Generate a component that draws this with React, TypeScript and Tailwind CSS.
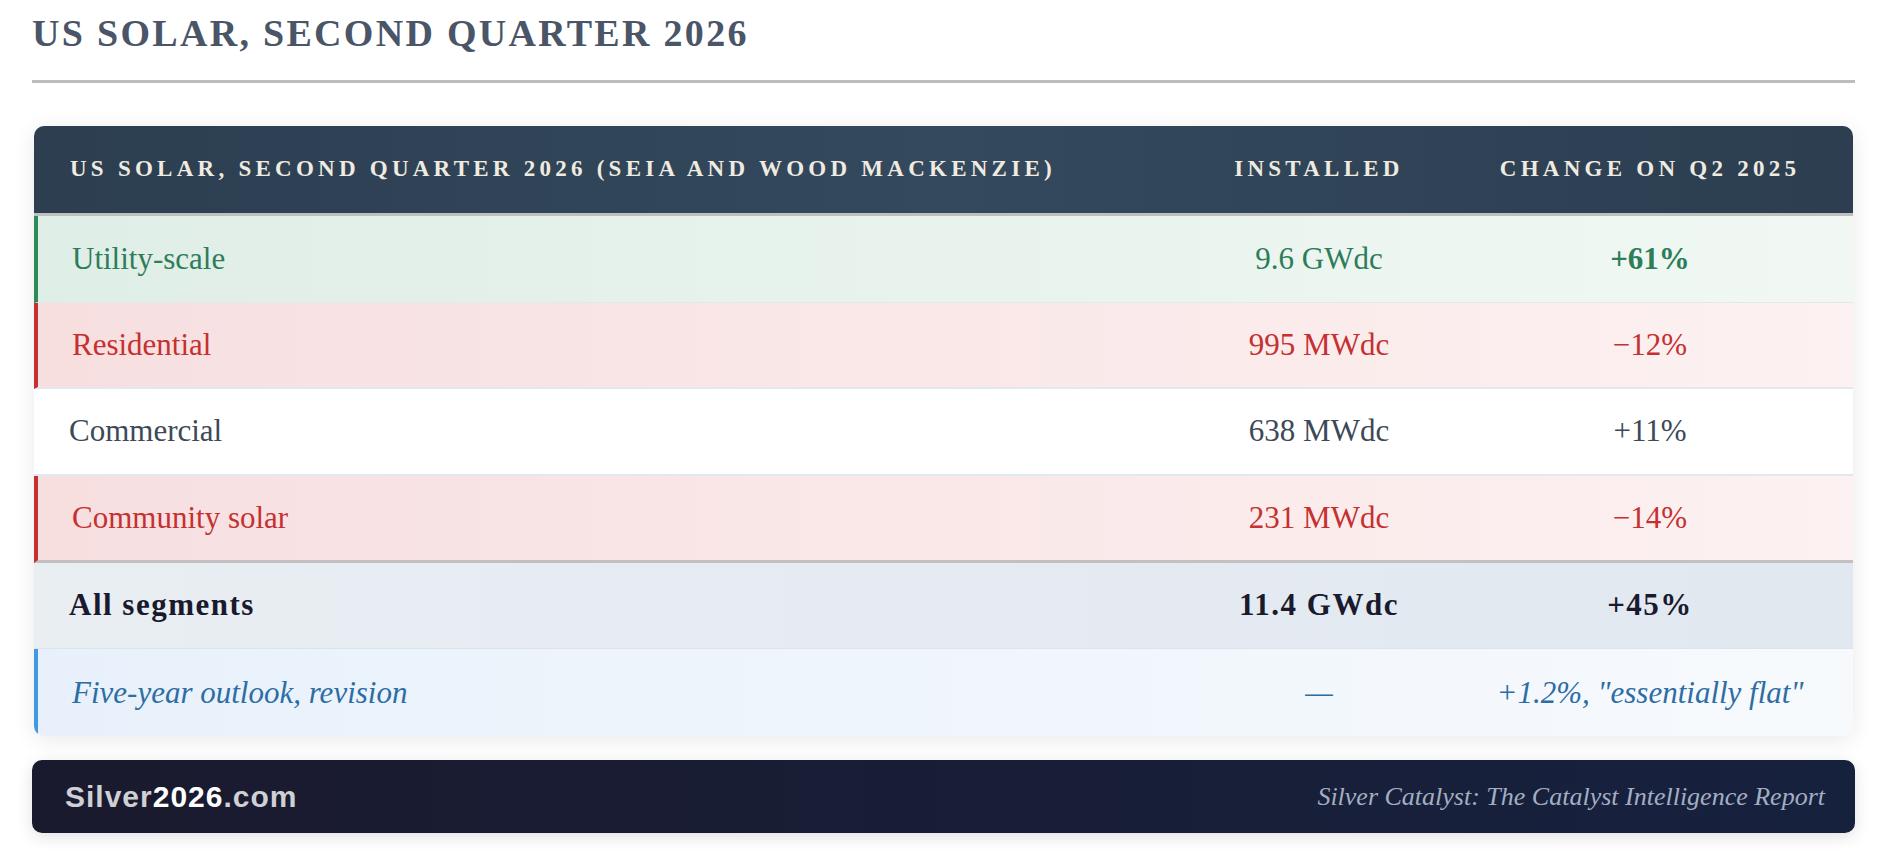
type Row = {
    label: string
    installed: string
    change: string
    rowCls: string
    textCls: string
    changeCls?: string
}

const rows: Row[] = [
    {
        label: 'Utility-scale',
        installed: '9.6 GWdc',
        change: '+61%',
        rowCls: 'bg-linear-to-r from-[#dfeee6] to-[#f1f8f4] border-l-4 border-l-[#2e8b57] pl-[34px] border-b border-b-[#e2e8f0]',
        textCls: 'text-[#2e7d5a]',
        changeCls: 'font-bold',
    },
    {
        label: 'Residential',
        installed: '995 MWdc',
        change: '\u221212%',
        rowCls: 'bg-linear-to-r from-[#f7dfe0] to-[#fdf1f1] border-l-4 border-l-[#c53030] pl-[34px] border-b-2 border-b-[#e2e8f0]',
        textCls: 'text-[#c53030]',
    },
    {
        label: 'Commercial',
        installed: '638 MWdc',
        change: '+11%',
        rowCls: 'bg-white pl-[35px] border-b-2 border-b-[#e2e8f0]',
        textCls: 'text-[#3d4858]',
    },
    {
        label: 'Community solar',
        installed: '231 MWdc',
        change: '\u221214%',
        rowCls: 'bg-linear-to-r from-[#f7dfe0] to-[#fdf1f1] border-l-4 border-l-[#c53030] pl-[34px] border-b-[3px] border-b-[#c4c0c1]',
        textCls: 'text-[#c53030]',
    },
]

export default function App() {
    return (
        <div className="min-h-screen w-full bg-white pl-8 pr-[33px] pt-3 pb-6" style={{ fontFamily: '"Liberation Serif", serif' }}>
            <h1 className="border-b-[3px] border-b-[#bdbdbd] pb-[25px] text-[38px] leading-[43px] font-bold tracking-[2.3px] text-[#4a5568]">
                US SOLAR, SECOND QUARTER 2026
            </h1>

            <div className="mx-[2px] mt-[43px] overflow-hidden rounded-[10px] bg-white shadow-[0_4px_22px_rgba(0,0,0,0.09)]">
                <div className="grid h-[90px] grid-cols-[1fr_256px_406px] items-center border-b-[3px] border-b-[#bfbfbf] bg-linear-to-r from-[#2c3e50] via-[#34495e] to-[#2c3e50] text-[23px] font-bold tracking-[4.25px] text-[#f0ebe0]">
                    <div className="pl-9">US SOLAR, SECOND QUARTER 2026 (SEIA AND WOOD MACKENZIE)</div>
                    <div className="text-center">INSTALLED</div>
                    <div className="text-center">CHANGE ON Q2 2025</div>
                </div>

                {rows.map((r) => (
                    <div key={r.label} className={`grid h-[86.7px] grid-cols-[1fr_256px_406px] items-center text-[31px] ${r.rowCls} ${r.textCls}`}>
                        <div>{r.label}</div>
                        <div className="text-center">{r.installed}</div>
                        <div className={`text-center ${r.changeCls ?? ''}`}>{r.change}</div>
                    </div>
                ))}

                <div className="grid h-[86.7px] grid-cols-[1fr_256px_406px] items-center border-b border-b-[#dde3ea] bg-linear-to-r from-[#e9eef3] to-[#e2e8f0] pl-[35px] text-[31px] font-bold tracking-[1.5px] text-[#1a1a2e]">
                    <div>All segments</div>
                    <div className="text-center">11.4 GWdc</div>
                    <div className="text-center">+45%</div>
                </div>

                <div className="grid h-[86.7px] grid-cols-[1fr_256px_406px] items-center border-l-4 border-l-[#4299e1] bg-linear-to-r from-[#e8f1fb] to-[#f7fafd] pl-[34px] text-[31px] italic text-[#2e6da4]">
                    <div>Five-year outlook, revision</div>
                    <div className="text-center">—</div>
                    <div className="text-center">+1.2%, "essentially flat"</div>
                </div>
            </div>

            <div className="mt-[24px] flex h-[73px] items-center justify-between rounded-[10px] bg-linear-to-r from-[#1a1a2e] to-[#16213e] pl-[33px] pr-[30px] shadow-[0_4px_16px_rgba(0,0,0,0.12)]">
                <div className="text-[30px] font-bold tracking-[1px] text-[#cfd0d6]" style={{ fontFamily: '"Liberation Sans", Arial, sans-serif' }}>
                    Silver<span className="text-white">2026</span>.com
                </div>
                <div className="text-[26px] italic text-[#a3aec2]">
                    Silver Catalyst: The Catalyst Intelligence Report
                </div>
            </div>
        </div>
    )
}
